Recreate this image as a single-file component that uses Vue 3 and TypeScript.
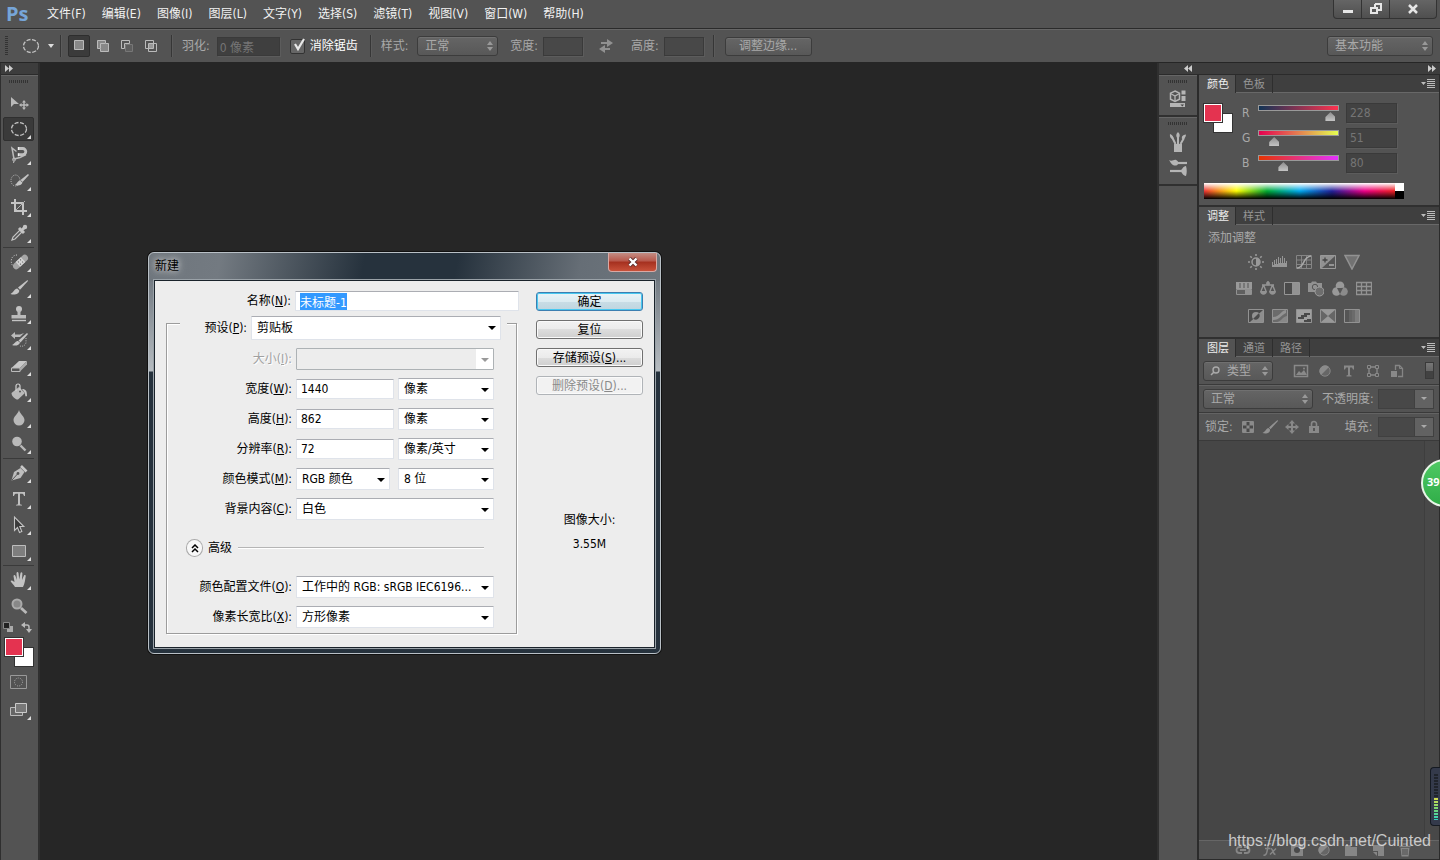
<script setup lang="ts">
import { onMounted, reactive, ref } from 'vue'

interface Tool { id: string; label: string; flyout?: boolean; active?: boolean }
interface Channel { key: 'r' | 'g' | 'b'; label: string }

const menus: string[] = ['文件(F)', '编辑(E)', '图像(I)', '图层(L)', '文字(Y)', '选择(S)', '滤镜(T)', '视图(V)', '窗口(W)', '帮助(H)']

const toolGroups: Tool[][] = [
  [
    { id: 'move', label: '移动工具' },
    { id: 'ellipse', label: '椭圆选框工具', flyout: true, active: true },
    { id: 'lasso', label: '磁性套索工具', flyout: true },
    { id: 'quick', label: '快速选择工具', flyout: true },
    { id: 'crop', label: '裁剪工具', flyout: true },
    { id: 'dropper', label: '吸管工具', flyout: true },
  ],
  [
    { id: 'heal', label: '污点修复画笔工具', flyout: true },
    { id: 'brush', label: '画笔工具', flyout: true },
    { id: 'stamp', label: '仿制图章工具', flyout: true },
    { id: 'history', label: '历史记录画笔工具', flyout: true },
    { id: 'eraser', label: '橡皮擦工具', flyout: true },
    { id: 'bucket', label: '油漆桶工具', flyout: true },
    { id: 'blur', label: '模糊工具', flyout: true },
    { id: 'dodge', label: '减淡工具', flyout: true },
  ],
  [
    { id: 'pen', label: '钢笔工具', flyout: true },
    { id: 'type', label: '横排文字工具', flyout: true },
    { id: 'path', label: '路径选择工具', flyout: true },
    { id: 'rect', label: '矩形工具', flyout: true },
  ],
  [
    { id: 'hand', label: '抓手工具', flyout: true },
    { id: 'zoom', label: '缩放工具' },
  ],
]

const glyphs: Record<string, string> = {
  move: '<path d="M4 6v10l3-3h5z" fill="#b9b9b9"/><path d="M17 9l2 2.500h-1.300v1.800h1.800V12l2.500 2-2.500 2v-1.300h-1.800v1.800H19L17 19l-2-2.500h1.300v-1.800h-1.800V16L12 14l2.500-2v1.300h1.800v-1.800H15z" fill="#b9b9b9"/>',
  ellipse: '<ellipse cx="12" cy="12" rx="7.500" ry="6.500" fill="none" stroke="#c4c4c4" stroke-width="1.300" stroke-dasharray="4 1.600"/>',
  lasso: '<path d="M9.500 8.500L5 5l2 11 6-1.500 6-3" fill="none" stroke="#bbb" stroke-width="1.500"/><circle cx="7" cy="16.500" r="1.500" fill="none" stroke="#bbb"/><path d="M7 18l-.5 2" stroke="#bbb"/><path d="M11.500 5.500h4.200a3 3 0 010 6.200h-4.200" fill="none" stroke="#c0c0c0" stroke-width="2.800"/><path d="M11.500 4v3M11.500 10.200v3" stroke="#eee" stroke-width="1.400"/>',
  quick: '<ellipse cx="8.500" cy="11.500" rx="4.500" ry="5.500" fill="none" stroke="#c4c4c4" stroke-dasharray="1 1.300"/><path d="M21 5l-7.500 6 2 2L22 6z" fill="#c4c4c4"/><path d="M13 11.500c-2 .3-2.500 2.500-5 4.500 3 1.200 6.800.5 7.500-2.500z" fill="#c4c4c4"/>',
  crop: '<path d="M8 4v12h12M4 8h12v12" fill="none" stroke="#c4c4c4" stroke-width="2"/><path d="M9 15l9-9" stroke="#b0b0b0"/>',
  dropper: '<path d="M5 19l1-3 7-7 2 2-7 7z" fill="#555" stroke="#c4c4c4" stroke-width="1.200"/><path d="M12 7l5 5M14.500 9.500L18 6" stroke="#c4c4c4" stroke-width="3"/><circle cx="18" cy="6" r="2.200" fill="#c4c4c4"/>',
  heal: '<path d="M10 5c-8 0-7 12-1 13" fill="none" stroke="#ccc" stroke-dasharray="1 1.500"/><g transform="rotate(-43 13.500 12)"><rect x="4.500" y="8.700" width="18" height="6.600" rx="3.300" fill="#a6a6a6"/><path d="M10 8.700h7v6.600h-7z" fill="#d4d4d4"/><path d="M11.500 10.500h1M14.500 10.500h1M11.500 13.500h1M14.500 13.500h1" stroke="#666" stroke-width="1.200"/></g>',
  brush: '<path d="M20.500 4L11 11.500l2 2.200L21 5z" fill="#c4c4c4"/><path d="M10.300 12.500C7 13 7.500 15.500 3.500 18c3.500 1.300 8.800.5 8.800-3.500z" fill="#c4c4c4"/>',
  stamp: '<circle cx="12" cy="7" r="3" fill="#c4c4c4"/><path d="M10.500 8h3v5h5.500v3.500H4.500V13h6z" fill="#bbb"/><path d="M5 18.500h14" stroke="#c4c4c4" stroke-width="1.400"/>',
  history: '<path d="M8 4L4 7.500 8 11V9h5l4-4-4 1.500H8z" fill="#bbb"/><path d="M20 5l-8.500 7.500 2 2L21 6z" fill="#c4c4c4"/><path d="M11 13c-2.500 0-3 2.500-6 4 3 1.300 7.500.5 8-2.500z" fill="#c4c4c4"/><path d="M19 10v4c0 3-3 5-6 4" fill="none" stroke="#bbb" stroke-dasharray="1 1.300"/>',
  eraser: '<path d="M4.500 14L12 7h8l-7 7z" fill="#c8c8c8"/><path d="M4.500 14h8.500v3.500H4.500z" fill="#555" stroke="#bbb"/><path d="M13 14l7-7v3.500l-7 7z" fill="#aaa"/>',
  bucket: '<path d="M4.500 13l7.500-6 6 6-7 6.500c-2 .5-6.500-3-6.500-6.500z" fill="#b9b9b9"/><path d="M9 11V6a2 2 0 014 0v5" fill="none" stroke="#d0d0d0" stroke-width="1.200"/><circle cx="13" cy="11.500" r="1" fill="#555"/><path d="M15 9c4 0 5 2 5 7-1.500 1-2 0-2-3z" fill="#c4c4c4"/>',
  blur: '<path d="M12 4c1 4 5.500 6.500 5.500 10a5.500 5.500 0 01-11 0C6.500 10.500 11 8 12 4z" fill="#b9b9b9"/>',
  dodge: '<circle cx="10" cy="9.500" r="4.800" fill="#b9b9b9"/><path d="M13.500 13.500l5 5" stroke="#b9b9b9" stroke-width="2.400"/>',
  pen: '<path d="M4.500 19.500L7 11l6.500-4 4 4-4 6z" fill="#bdbdbd"/><path d="M5 19l5.500-6" stroke="#555"/><circle cx="11" cy="12.500" r="1.400" fill="#555"/><path d="M14 5l5.500 5.500" stroke="#c8c8c8" stroke-width="2.600"/>',
  type: '<path d="M6 5h12v4h-1c-.4-1.800-1-2.300-2.500-2.300H13v9.800c0 1 .5 1.200 2 1.300v.7H9v-.7c1.500-.1 2-.3 2-1.300V6.700H9.500C8 6.700 7.400 7.200 7 9H6z" fill="#c0c0c0"/>',
  path: '<path d="M7.500 4v13.500l3-3 2 5 2.300-1-2-5h4z" fill="#3a3a3a" stroke="#c4c4c4" stroke-width="1.100"/>',
  rect: '<path d="M5.500 6.500h13v11h-13z" fill="#7e7e7e" stroke="#bdbdbd"/>',
  hand: '<path d="M8 19c-1-2-3.500-4-4.500-6 .8-1 2.200-.5 4 1L6.500 8c.2-1.200 1.500-1.200 2 0l1.300 4-.3-7c.4-1.200 1.700-1.200 2 0l.7 6.500L13.500 5c.5-1 1.700-.9 1.900.2L15 12l2-4.500c.6-.8 1.700-.5 1.700.6-.5 3-.8 7.900-2.700 10.900z" fill="#c2c2c2"/>',
  zoom: '<circle cx="10" cy="10" r="4.500" fill="#888" stroke="#aaa" stroke-width="2"/><path d="M14 14l5.500 5" stroke="#b9b9b9" stroke-width="2.800"/>',
  quickmask: '<path d="M3.500 5.500h16v13h-16z" fill="none" stroke="#999"/><circle cx="11.500" cy="12" r="4" fill="none" stroke="#aaa" stroke-dasharray="1 1.200"/>',
  screen: '<path d="M3.500 9.500h12v8h-12z" fill="#666" stroke="#bbb"/><path d="M8.500 5.500h11v9h-11z" fill="#787878" stroke="#ccc"/>',
  selNew: '<path d="M2.500 1.500h9v9h-9z" fill="#888" stroke="#bbb"/>',
  selAdd: '<path d="M1.500 1.500h8v3h3v8h-8v-3h-3z" fill="#888" stroke="#bbb"/><path d="M4.500 9V4.500H9" fill="none" stroke="#bbb"/>',
  selSub: '<path d="M5.500 5.500h7v7h-7z" fill="#5e5e5e" stroke="#777"/><path d="M9.500 4.500v-3h-8v8h3v-5z" fill="none" stroke="#bbb"/>',
  selInt: '<path d="M1.500 1.500h8v8h-8zM4.500 4.500h8v8h-8z" fill="none" stroke="#bbb"/><path d="M5 5h4v4H5z" fill="#999"/>',
  swap: '<path d="M3 3h6V0l6 4-6 4V5H3z" fill="#919191"/><path d="M12 9H7V6l-6 4 6 4v-3h5z" fill="#919191"/>',
  cube: '<path d="M6 1l4.500 2.200v6L6 11.500 1.500 9.200v-6z" fill="none" stroke="#b5b5b5" stroke-width="1.500"/><path d="M1.500 3.500L6 6l4.500-2.500M6 6v5" fill="none" stroke="#b5b5b5" stroke-width="1.300"/><path d="M12.500.5h4v4h-4zM12.500 6h4v5h-4zM1 13h15v4H1z" fill="#b5b5b5"/><path d="M11.500 14.500h3.600l-1.800 2z" fill="#444"/>',
  brushes: '<path d="M5 12h8v8H5z" fill="#b5b5b5"/><path d="M6.500 12L3 5M9 12V5M11.500 12l3.500-6" stroke="#b5b5b5" stroke-width="2"/><path d="M1 2c-.5 3 1 5 3.500 5 0-2-.5-4-3.500-5zM9 0C6.500 2.500 7 5 9 6.500c2-1.500 2.500-4 0-6.500zM17 2.500c-3.500.5-4.500 2-4 4.500 2.500 0 4-2 4-4.500z" fill="#b5b5b5"/>',
  presets: '<path d="M8 4h10" stroke="#b5b5b5" stroke-width="2.200"/><path d="M0 1c3 2 5-1 7 0 3 1 3 5 0 5.500C3 7 2 4 0 1z" fill="#b5b5b5"/><path d="M1 12h11" stroke="#b5b5b5" stroke-width="2.200"/><path d="M11 12c2-1 3-5 6-5 1 3 1 7 0 10-3 0-4-4-6-5z" fill="#b5b5b5"/>',
  bright: '<circle cx="8" cy="8" r="4" fill="none" stroke="#999" stroke-width="1.500"/><path d="M8 4a4 4 0 010 8z" fill="#999"/><path d="M8 0v2M8 14v2M0 8h2M14 8h2M2.300 2.300l1.500 1.500M12.200 12.200l1.500 1.500M13.700 2.300l-1.500 1.500M3.800 12.200l-1.500 1.500" stroke="#999" stroke-width="1.600"/>',
  levels: '<path d="M0 13v-5h1v3h1V6h1v4h1V5h1v5h1V3h1v6h1V4h1v5h1V2h1v7h1V4h1v5h1V7h1v6z" fill="#969696"/>',
  curves: '<path d="M.5 1.500h15v13H.5zM5.500 2v12M10.500 2v12M1 6h14M1 10.500h14" fill="none" stroke="#858585"/><path d="M1 14c8 0 5-11 14-12" fill="none" stroke="#aaa" stroke-width="1.600"/>',
  exposure: '<path d="M.5 1.500h15v13H.5z" fill="#929292" stroke="#999"/><path d="M15 2v12H2z" fill="#555"/><path d="M2.500 6h5M5 3.500v5" stroke="#444" stroke-width="1.300"/><path d="M9 11h5" stroke="#aaa" stroke-width="1.500"/>',
  vibrance: '<path d="M1 1.500h14L8 15z" fill="#727272" stroke="#929292" stroke-width="1.500"/>',
  hue: '<path d="M0 1h16v7H0z" fill="#999"/><path d="M4 2v5M8 2v5M12 2v5" stroke="#777" stroke-width="2"/><path d="M.5 8.500h15v5H.5z" fill="#606060" stroke="#919191"/><path d="M9 9h6v4H9z" fill="#929292"/>',
  balance: '<path d="M8 0v4M2 4h12M3.500 4L1 10M3.500 4L6 10M12.500 4L10 10M12.500 4L15 10" stroke="#959595" stroke-width="1.400"/><path d="M0 10h7c0 5-7 5-7 0zM9 10h7c0 5-7 5-7 0z" fill="#929292"/><circle cx="8" cy="2.500" r="2" fill="#929292"/>',
  bw: '<path d="M.5 1.500h15v12H.5z" fill="#4b4b4b" stroke="#969696"/><path d="M8 2h7v11H8z" fill="#929292"/>',
  photo: '<path d="M0 2h3l1-1.500h4L9 2h5v9H0z" fill="#929292"/><circle cx="7" cy="6" r="2.700" fill="none" stroke="#555"/><circle cx="11.500" cy="10.500" r="4.500" fill="#6e6e6e" stroke="#a0a0a0"/>',
  mixer: '<circle cx="8" cy="4.800" r="4.300" fill="#999"/><circle cx="4.500" cy="10.500" r="4.300" fill="#999"/><circle cx="11.500" cy="10.500" r="4.300" fill="#8b8b8b"/><path d="M5 7h6l-3 6z" fill="#565656"/>',
  lookup: '<path d="M.5 1.500h15v12H.5zM5.500 2v11M10.500 2v11M1 5.500h14M1 9.500h14" fill="none" stroke="#929292" stroke-width="1.300"/>',
  invert: '<path d="M.5 1.500h15v13H.5z" fill="#4b4b4b" stroke="#929292"/><path d="M15 2v12H2z" fill="#8e8e8e"/><circle cx="8" cy="8" r="4" fill="#929292"/><path d="M5.200 10.800a4 4 0 005.600-5.600z" fill="#4b4b4b"/>',
  poster: '<path d="M.5 1.500h15v13H.5z" fill="#6b6b6b" stroke="#929292"/><path d="M1 9c7 0 7-6 13-7v3C9 7 8 12 1 12z" fill="#929292"/><path d="M5 14c5-1 5-5 10-6v6z" fill="#888"/>',
  threshold: '<path d="M.5 1.500h15v13H.5z" fill="#a0a0a0" stroke="#929292"/><path d="M2 9h3V7h3V5h6v2h-3v2H8v2H2zM8 12h3v-1h4v3H8z" fill="#4a4a4a"/>',
  selective: '<path d="M.5 1.500h15v13H.5z" fill="#666" stroke="#929292"/><path d="M1 2h14L1 14h14z" fill="#999"/>',
  gradmap: '<path d="M.5 1.500h15v13H.5z" fill="#6b6b6b" stroke="#929292"/><path d="M1 2h4v12H1z" fill="#555"/><path d="M5 2h3v12H5z" fill="#636363"/><path d="M11 2h4v12h-4z" fill="#7d7d7d"/>',
  fImage: '<path d="M1.500 2.500h13v11h-13z" fill="none" stroke="#898989" stroke-width="1.500"/><path d="M3 12l3-4 2 2 3-3 3 5z" fill="#898989"/><circle cx="11" cy="5.500" r="1" fill="#898989"/>',
  fAdjust: '<circle cx="8" cy="8" r="5.200" fill="#666" stroke="#858585"/><path d="M4 12L12 4A5.500 5.500 0 004 4.500 5.500 5.500 0 004 12z" fill="#8b8b8b"/>',
  fType: '<path d="M3 2.500h10v4h-1l-1-2H9v7.500l1.500.5v1h-5v-1L7 12V4.500H5l-1 2H3z" fill="#898989"/>',
  fShape: '<path d="M4 4h8v8H4z" fill="none" stroke="#898989" stroke-width="1.400"/><path d="M2.500 2.500h3v3h-3zM10.500 2.500h3v3h-3zM2.500 10.500h3v3h-3zM10.500 10.500h3v3h-3z" fill="#535353" stroke="#898989"/>',
  fSmart: '<path d="M6.500 7V2.500h4l3 3v8H9" fill="none" stroke="#858585" stroke-width="1.300"/><path d="M10.500 2.500v3h3" fill="none" stroke="#858585"/><path d="M2 8h6v6H2z" fill="#898989"/>',
  lockPixels: '<path d="M2.500 2.500h11v11h-11z" fill="#4a4a4a" stroke="#898989"/><path d="M3 3h3.500v3.500H3zM9.500 3H13v3.500H9.500zM6.500 6.500h3v3h-3zM3 9.500h3.500V13H3zM9.500 9.500H13V13H9.500z" fill="#8b8b8b"/>',
  lockBrush: '<path d="M15.500 1L7 8.500l1.500 1.700L16 2z" fill="#929292"/><path d="M6.500 9C4 9.500 4 12 .5 14c3 1 8 .5 7.500-3.500z" fill="#929292"/>',
  lockMove: '<path d="M8 1l3 3.500H9V7h2.500V5L15 8l-3.500 3V9H9v2.500h2L8 15l-3-3.500h2V9H4.500v2L1 8l3.500-3v2H7V4.500H5z" fill="#898989"/>',
  lock: '<path d="M5.500 7V5a2.500 2.500 0 015 0v2" fill="none" stroke="#898989" stroke-width="1.600"/><path d="M3 7h10v7H3z" fill="#898989"/><path d="M8 9v3" stroke="#4a4a4a" stroke-width="1.600"/>',
  link: '<path d="M7 5H4.500a3 3 0 000 6H7M9 5h2.500a3 3 0 010 6H9M5 8h6" fill="none" stroke="#868686" stroke-width="1.800"/>',
  fx: '<path d="M9 2C6 1 6 4 5.500 7S4.500 14 1.500 13M3 6.500h5M8.500 6.500c3 0 2 6 5 6M14 6.500l-6 6" fill="none" stroke="#868686" stroke-width="1.500"/>',
  mask: '<path d="M2 2h12v12H2z" fill="#868686"/><circle cx="8" cy="8" r="3" fill="#4a4a4a"/>',
  folder: '<path d="M2 3h5l1 2h6v9H2z" fill="#868686"/>',
  newLayer: '<path d="M3 3h11v11H8V9H3z" fill="#868686"/><path d="M3 10h4v4z" fill="#868686"/>',
  trash: '<path d="M6 2h4M2.500 4.500h11" stroke="#868686" stroke-width="1.500"/><path d="M3.500 6h9l-1 8.500h-7z" fill="#868686"/><path d="M6 7v6M8 7v6M10 7v6" stroke="#4c4c4c"/>',
}

const adjustments: string[][] = [
  ['bright', 'levels', 'curves', 'exposure', 'vibrance'],
  ['hue', 'balance', 'bw', 'photo', 'mixer', 'lookup'],
  ['invert', 'poster', 'threshold', 'selective', 'gradmap'],
]
const layerFilters = ['fImage', 'fAdjust', 'fType', 'fShape', 'fSmart']
const layerLocks = ['lockPixels', 'lockBrush', 'lockMove', 'lock']
const layerActions = ['link', 'fx', 'mask', 'fAdjust', 'folder', 'newLayer', 'trash']
const selectionModes = ['selNew', 'selAdd', 'selSub', 'selInt']
const channels: Channel[] = [{ key: 'r', label: 'R' }, { key: 'g', label: 'G' }, { key: 'b', label: 'B' }]
const color = reactive({ r: 228, g: 51, b: 80 })
const doc = reactive({ name: '未标题-1', width: '1440', height: '862', resolution: '72' })
const antialias = ref(true)
const nameField = ref<HTMLInputElement | null>(null)

onMounted(() => {
  nameField.value?.focus()
  nameField.value?.select()
})
</script>

<template>
  <div class="app">
    <header class="menubar">
      <span class="logo">Ps</span>
      <nav class="menus">
        <button v-for="m in menus" :key="m" type="button">{{ m }}</button>
      </nav>
      <div class="winctl">
        <button type="button" aria-label="最小化"><svg width="12" height="12"><path d="M1 7h10v3H1z" fill="#e6e6e6" /></svg></button>
        <button type="button" aria-label="还原"><svg width="12" height="12"><path d="M5 1h6v6H8M5 4V1" fill="none" stroke="#e6e6e6" stroke-width="2" /><path d="M1 5h6v5H1z" fill="none" stroke="#e6e6e6" stroke-width="2" /></svg></button>
        <button type="button" aria-label="关闭"><svg width="12" height="12"><path d="M2 2l8 8M10 2l-8 8" stroke="#e6e6e6" stroke-width="2.500" /></svg></button>
      </div>
    </header>

    <div class="options">
      <span class="grip-v"></span>
      <svg class="opt-tool" width="24" height="24" v-html="glyphs.ellipse"></svg>
      <span class="caret"></span>
      <span class="rule"></span>
      <div class="modes">
        <button v-for="(m, i) in selectionModes" :key="m" type="button" :class="{ on: i === 0 }" :aria-label="m">
          <svg width="14" height="14" v-html="glyphs[m]"></svg>
        </button>
      </div>
      <span class="rule"></span>
      <label for="feather">羽化:</label>
      <input id="feather" class="field feather" value="0 像素" disabled>
      <label class="check"><input v-model="antialias" type="checkbox"><span class="box"><svg width="16" height="16"><path v-if="antialias" d="M4 6l3 5 6-10" fill="none" stroke="#e8e8e8" stroke-width="2.200" /></svg></span><span>消除锯齿</span></label>
      <span class="rule"></span>
      <label for="style">样式:</label>
      <span class="pick style-pick"><select id="style"><option>正常</option></select></span>
      <label class="w-label" for="fixw">宽度:</label>
      <input id="fixw" class="field small" disabled>
      <button class="swap" type="button" aria-label="交换"><svg width="16" height="14" v-html="glyphs.swap"></svg></button>
      <label for="fixh">高度:</label>
      <input id="fixh" class="field small" disabled>
      <span class="rule"></span>
      <button class="refine" type="button">调整边缘...</button>
      <span class="pick workspace"><select aria-label="工作区"><option>基本功能</option></select></span>
    </div>

    <div class="main">
      <aside class="toolbar">
        <div class="collapse"><svg width="8" height="7"><path d="M0 0l4 3.500L0 7zM4 0l4 3.500L4 7z" fill="#ccc" /></svg></div>
        <div class="toolbox">
          <span class="grip-h"></span>
          <div v-for="(g, gi) in toolGroups" :key="gi" class="tools">
            <button v-for="t in g" :key="t.id" type="button" class="tool" :class="{ on: t.active }" :aria-label="t.label">
              <svg width="24" height="24"><g v-html="glyphs[t.id]"></g><path v-if="t.flyout" d="M24 18v4h-4z" fill="#ddd" /></svg>
            </button>
          </div>
          <div class="mini">
            <svg width="10" height="10"><path d="M4 4h6v6H4z" fill="#aaa" /><path d="M.5.5h6v6h-6z" fill="#222" stroke="#888" /></svg>
            <svg width="11" height="11"><path d="M3 3h3q2 0 2 2v4" fill="none" stroke="#bbb" stroke-width="1.500" /><path d="M4 0v6L0 3zM5 7h6l-3 4z" fill="#bbb" /></svg>
          </div>
          <div class="swatches"><span class="bg"></span><span class="fg"></span></div>
          <button class="tool extra" type="button" aria-label="快速蒙版"><svg width="24" height="24" v-html="glyphs.quickmask"></svg></button>
          <button class="tool extra" type="button" aria-label="屏幕模式"><svg width="24" height="24"><g v-html="glyphs.screen"></g><path d="M24 18v4h-4z" fill="#ddd" /></svg></button>
        </div>
      </aside>

      <main class="canvas">
        <section class="dialog" role="dialog" aria-labelledby="dlg-title">
          <div class="titlebar">
            <h1 id="dlg-title">新建</h1>
            <button class="close" type="button" aria-label="关闭对话框"><svg width="12" height="10"><path d="M2.500 1.500l7 7M9.500 1.500l-7 7" stroke="#5b3030" stroke-width="4" /><path d="M2.500 1.500l7 7M9.500 1.500l-7 7" stroke="#fff" stroke-width="2.400" /></svg></button>
          </div>
          <form class="client" @submit.prevent>
            <div class="left">
              <div class="row name-row">
                <label for="name">名称(<u>N</u>):</label>
                <input id="name" ref="nameField" v-model="doc.name" class="text">
              </div>
              <div class="group">
                <div class="ghead">
                  <label for="preset">预设(<u>P</u>):</label>
                  <span class="combo preset"><select id="preset"><option>剪贴板</option></select></span>
                </div>
                <div class="row off">
                  <label for="size">大小(<u>I</u>):</label>
                  <span class="combo wide"><select id="size" disabled><option></option></select></span>
                </div>
                <div class="row">
                  <label for="w">宽度(<u>W</u>):</label>
                  <input id="w" v-model="doc.width" class="text num">
                  <span class="combo unit"><select aria-label="宽度单位"><option>像素</option></select></span>
                </div>
                <div class="row">
                  <label for="h">高度(<u>H</u>):</label>
                  <input id="h" v-model="doc.height" class="text num">
                  <span class="combo unit"><select aria-label="高度单位"><option>像素</option></select></span>
                </div>
                <div class="row">
                  <label for="res">分辨率(<u>R</u>):</label>
                  <input id="res" v-model="doc.resolution" class="text num">
                  <span class="combo unit"><select aria-label="分辨率单位"><option>像素/英寸</option></select></span>
                </div>
                <div class="row split">
                  <label for="mode">颜色模式(<u>M</u>):</label>
                  <span class="combo mode"><select id="mode"><option>RGB 颜色</option></select></span>
                  <span class="combo unit"><select aria-label="位深度"><option>8 位</option></select></span>
                </div>
                <div class="row">
                  <label for="bgc">背景内容(<u>C</u>):</label>
                  <span class="combo wide"><select id="bgc"><option>白色</option></select></span>
                </div>
                <div class="advanced">
                  <button type="button" aria-label="收起高级选项"><svg width="8" height="9"><path d="M1 4l3-3 3 3M1 8l3-3 3 3" fill="none" stroke="#000" stroke-width="1.500" /></svg></button>
                  <span>高级</span>
                  <i></i>
                </div>
                <div class="row">
                  <label for="profile">颜色配置文件(<u>O</u>):</label>
                  <span class="combo wide"><select id="profile"><option>工作中的 RGB: sRGB IEC6196...</option></select></span>
                </div>
                <div class="row">
                  <label for="aspect">像素长宽比(<u>X</u>):</label>
                  <span class="combo wide"><select id="aspect"><option>方形像素</option></select></span>
                </div>
              </div>
            </div>
            <div class="right">
              <button class="btn primary" type="submit">确定</button>
              <button class="btn" type="button">复位</button>
              <button class="btn" type="button">存储预设(<u>S</u>)...</button>
              <button class="btn" type="button" disabled>删除预设(<u>D</u>)...</button>
              <p class="size">图像大小:<br>3.55M</p>
            </div>
          </form>
        </section>
      </main>

      <aside class="side">
        <div class="collapse right-collapse">
          <svg width="8" height="7"><path d="M4 0L0 3.500 4 7zM8 0L4 3.500 8 7z" fill="#ccc" /></svg>
          <svg width="8" height="7"><path d="M0 0l4 3.500L0 7zM4 0l4 3.500L4 7z" fill="#ccc" /></svg>
        </div>
        <div class="side-body">
          <div class="dock">
            <div class="dgroup"><span class="grip-h"></span><button type="button" aria-label="属性"><svg width="18" height="18" v-html="glyphs.cube"></svg></button></div>
            <div class="dgroup"><span class="grip-h"></span><button type="button" aria-label="画笔"><svg width="18" height="20" v-html="glyphs.brushes"></svg></button><button type="button" aria-label="画笔预设"><svg width="18" height="18" v-html="glyphs.presets"></svg></button></div>
          </div>
          <div class="panels">
            <section class="panel">
              <div class="tabs"><button class="on" type="button">颜色</button><button type="button">色板</button><svg width="14" height="9"><path d="M0 3h5L2.500 6zM6 0h8v1H6zM6 2h8v1H6zM6 4h8v1H6zM6 6h8v1H6zM6 8h8v1H6z" fill="#bbb" /></svg></div>
              <div class="color-body">
                <div class="swatches"><span class="bg"></span><span class="fg"></span></div>
                <div class="channels">
                  <div v-for="c in channels" :key="c.key" class="channel">
                    <label :for="'ch-' + c.key">{{ c.label }}</label>
                    <input :id="'ch-' + c.key" v-model.number="color[c.key]" type="range" min="0" max="255" :class="c.key">
                    <input class="field val" :value="color[c.key]" :aria-label="c.label + ' 数值'" disabled>
                  </div>
                </div>
              </div>
              <div class="spectrum"><span></span><i></i></div>
            </section>

            <section class="panel">
              <div class="tabs"><button class="on" type="button">调整</button><button type="button">样式</button><svg width="14" height="9"><path d="M0 3h5L2.500 6zM6 0h8v1H6zM6 2h8v1H6zM6 4h8v1H6zM6 6h8v1H6zM6 8h8v1H6z" fill="#bbb" /></svg></div>
              <div class="adjust-body">
                <p>添加调整</p>
                <div v-for="(r, i) in adjustments" :key="i" class="adj-row">
                  <button v-for="a in r" :key="a" type="button" :aria-label="a"><svg width="16" height="16" v-html="glyphs[a]"></svg></button>
                </div>
              </div>
            </section>

            <section class="panel layers">
              <div class="tabs"><button class="on" type="button">图层</button><button type="button">通道</button><button type="button">路径</button><svg width="14" height="9"><path d="M0 3h5L2.500 6zM6 0h8v1H6zM6 2h8v1H6zM6 4h8v1H6zM6 6h8v1H6zM6 8h8v1H6z" fill="#bbb" /></svg></div>
              <div class="lrow">
                <span class="pick kind"><svg width="10" height="10"><circle cx="6" cy="4" r="3" fill="none" stroke="#aaa" stroke-width="1.400" /><path d="M4 6L1 9" stroke="#aaa" stroke-width="1.600" /></svg><select aria-label="图层类型"><option>类型</option></select></span>
                <div class="filters"><button v-for="f in layerFilters" :key="f" type="button" :aria-label="f"><svg width="16" height="16" v-html="glyphs[f]"></svg></button></div>
                <span class="toggle"></span>
              </div>
              <div class="lrow">
                <span class="pick blend"><select aria-label="混合模式"><option>正常</option></select></span>
                <label for="opacity">不透明度:</label>
                <span class="spin"><input id="opacity" disabled><b></b></span>
              </div>
              <div class="lrow">
                <span>锁定:</span>
                <div class="locks"><button v-for="l in layerLocks" :key="l" type="button" :aria-label="l"><svg width="16" height="16" v-html="glyphs[l]"></svg></button></div>
                <label for="fill">填充:</label>
                <span class="spin"><input id="fill" disabled><b></b></span>
              </div>
              <div class="list"><span></span></div>
              <div class="actions"><button v-for="a in layerActions" :key="a" type="button" :aria-label="a"><svg width="16" height="16" v-html="glyphs[a]"></svg></button></div>
            </section>
          </div>
        </div>
      </aside>
    </div>

    <div class="badge">39</div>
    <div class="meter"><i></i></div>
    <a class="watermark" href="https://blog.csdn.net/Cuinted">https://blog.csdn.net/Cuinted</a>
  </div>
</template>

<style>
body { margin: 0; background: #262626; }
</style>

<style scoped>
* { box-sizing: border-box; }
.app {
  position: relative; display: flex; flex-direction: column; height: 100vh; overflow: hidden;
  background: #535353; color: #a9a9a9;
  font: 12px/16px "DejaVu Sans Condensed", "Noto Sans", "Noto Sans CJK SC", sans-serif;
}
button, input, select { font: inherit; color: inherit; margin: 0; padding: 0; border: 0; background: none; outline: none; border-radius: 0; }
button { display: inline-flex; align-items: center; justify-content: center; white-space: nowrap; }
select { appearance: none; width: 100%; height: 100%; opacity: 1; }
svg { display: block; flex: none; }
p, h1 { margin: 0; font: inherit; }
label { white-space: nowrap; }

.menubar { display: flex; flex: none; height: 29px; border-bottom: 1px solid #2b2b2b; }
.logo { width: 47px; padding-left: 6px; font: 700 20px/27px "Open Sans", sans-serif; color: #76a5d8; }
.menus { display: flex; gap: 16px; color: #f2f2f2; }
.winctl { display: flex; height: 19px; margin: 0 3px 0 auto; border: 1px solid #333; border-top: 0; border-radius: 0 0 4px 4px; background: linear-gradient(#656565, #4f4f4f); }
.winctl button { width: 28px; border-right: 1px solid #333; }
.winctl button:last-child { width: 46px; border: 0; }

.options { display: flex; align-items: center; flex: none; height: 33px; padding: 0 7px 0 5px; border-top: 1px solid #666; }
.grip-v { width: 3px; height: 20px; margin-right: 11px; background: repeating-linear-gradient(#333 0 1px, transparent 1px 2px); }
.caret { margin: 0 6px 0 5px; border: 3px solid transparent; border-top: 4px solid #ddd; border-bottom: 0; }
.rule { width: 1px; height: 22px; background: #363636; margin-right: 7px; box-shadow: 1px 0 #5b5b5b; }
.rule + label { margin-left: 3px; }
.modes { display: flex; align-items: center; gap: 2px; margin-right: 9px; }
.modes button { width: 22px; height: 22px; }
.modes .on { background: #3b3b3b; border: 1px solid #2e2e2e; border-radius: 2px; }
.field { height: 19px; background: #484848; border: 1px solid #3a3a3a; box-shadow: 1px 1px #5c5c5c; color: #757575; }
.feather { width: 63px; margin-left: 7px; padding-left: 2px; background: #3f3f3f; }
.check { display: flex; align-items: center; gap: 5px; margin: 0 12px 0 10px; color: #fff; }
.check input { position: absolute; opacity: 0; }
.box { width: 15px; height: 15px; border: 1px solid #333; border-radius: 2px; background: #666; }
.box svg { margin-top: -2px; }
.pick { position: relative; display: flex; align-items: center; height: 20px; border: 1px solid #3c3c3c; border-radius: 3px; background: linear-gradient(#656565, #585858); box-shadow: inset 0 1px #707070; }
.pick select { padding-left: 7px; }
.pick::before, .pick::after { content: ""; position: absolute; right: 4px; border: 3px solid transparent; pointer-events: none; }
.pick::before { top: 4px; border-bottom: 4px solid #999; border-top: 0; }
.pick::after { bottom: 4px; border-top: 4px solid #999; border-bottom: 0; }
.style-pick { width: 81px; margin-left: 9px; }
.w-label { margin-left: 12px; }
.small { width: 40px; margin-left: 5px; }
.swap { margin: 0 17px 0 15px; }
.small + .rule { margin: 0 11px 0 9px; }
.refine { width: 87px; height: 19px; border: 1px solid #3c3c3c; border-radius: 3px; background: linear-gradient(#656565, #585858); box-shadow: inset 0 1px #707070; }
.workspace { width: 106px; margin-left: auto; }

.main { display: flex; flex: 1; min-height: 0; border-top: 1px solid #262626; }
.collapse { display: flex; align-items: center; flex: none; height: 12px; padding: 0 4px; background: #3d3d3d; border-bottom: 1px solid #2b2b2b; }
.toolbar { display: flex; flex-direction: column; width: 40px; border: solid #2f2f2f; border-width: 0 2px 0 1px; }
.toolbox { display: flex; flex-direction: column; align-items: center; flex: 1; padding: 4px 2px 0 0; border-top: 1px solid #666; }
.grip-h { width: 20px; height: 3px; flex: none; background: repeating-linear-gradient(90deg, #333 0 1px, transparent 1px 2px); }
.toolbox > .grip-h { margin-bottom: 7px; }
.tools + .tools { border-top: 1px solid #3a3a3a; margin-top: 1px; padding-top: 1px; }
.tools { display: flex; flex-direction: column; }
.tool { width: 31px; height: 24px; margin: 1px 0; border: 1px solid transparent; flex: none; }
.tool.on { background: #3a3a3a; border-color: #2f2f2f; border-radius: 2px; }
.mini { display: flex; gap: 8px; margin: 3px 0 4px; padding-right: 2px; }
.swatches { position: relative; width: 30px; height: 30px; flex: none; }
.swatches span { position: absolute; width: 20px; height: 20px; border: 1px solid #333; background: #fff; }
.swatches .bg { right: 0; bottom: 0; }
.swatches .fg { left: 0; top: 0; background: #e43350; box-shadow: inset 0 0 0 1px #fff; }
.extra { margin-top: 3px; }

.canvas { position: relative; flex: 1; min-width: 0; background: #262626; }

.dialog {
  position: absolute; left: 108px; top: 189px; width: 513px; padding: 0 5px 5px; border: 1px solid #b9c0c6; border-radius: 6px;
  background: linear-gradient(100deg, #6f767d, #737a81 14%, #26323d 42%, #26323d 60%, #666e76 84%, #6e767d) top / 100% 28px no-repeat,
    linear-gradient(#737b83 28px, #b6bcc1 118px, #26323d 119px);
  box-shadow: 0 0 0 1px #111;
  color: #000;
}
.titlebar { display: flex; justify-content: space-between; height: 27px; }
.titlebar h1 { padding-left: 1px; line-height: 26px; text-shadow: 0 0 6px #ccc, 0 0 9px #ccc; }
.close { width: 49px; height: 19px; margin-right: -2px; border: 1px solid #d9a9a4; border-top: 0; border-radius: 0 0 4px 4px; background: linear-gradient(#c38c83, #b8584b 45%, #a5301f 50%, #c8513a); }
.client { display: flex; justify-content: space-between; padding: 10px 11px 13px; background: #ededed; border: 1px solid #1a232b; box-shadow: 0 0 0 1px #9aa2a8; }
.row { display: flex; align-items: center; gap: 4px; height: 30px; }
.row label { width: 125px; text-align: right; }
.name-row { height: 20px; margin-bottom: 12px; }
.name-row .text { width: 224px; }
.text { height: 20px; padding: 0 4px; background: #fff; border: 1px solid #dfe3ea; border-top-color: #abadb3; border-radius: 1px; color: #000; }
.text::selection { background: #3399ff; color: #fff; }
.num { width: 98px; }
.group { width: 351px; padding-bottom: 1px; border: 1px solid #9c9c9c; box-shadow: 1px 1px #fff, inset 1px 1px #fff; }
.ghead { display: flex; align-items: center; gap: 4px; height: 23px; margin: -8px 9px 5px 13px; background: #ededed; }
.ghead label { width: 67px; text-align: right; }
.combo { position: relative; display: block; height: 22px; background: #fff; border: 1px solid #dfe3ea; border-top-color: #abadb3; border-radius: 1px; }
.combo select { padding-left: 5px; }
.combo::after { content: ""; position: absolute; right: 4px; top: 9px; border: 4px solid transparent; border-top-color: #000; border-bottom: 0; pointer-events: none; }
.preset { width: 250px; height: 24px; }
.wide { width: 198px; }
.unit { width: 96px; }
.mode { width: 94px; }
.mode + .unit { margin-left: 4px; }
.off label { color: #a0a0a0; text-shadow: 1px 1px #fff; }
.off .combo { border-color: #adb2b5; background: linear-gradient(90deg, #ededed 179px, #fff 179px); }
.off .combo::after { border-top-color: #999; }
.advanced { display: flex; align-items: center; gap: 6px; height: 18px; margin: 15px 32px 15px 20px; }
.advanced button { width: 15px; height: 16px; border-radius: 8px; background: #f8f8f8; box-shadow: 0 0 0 1px #aaa; }
.advanced i { flex: 1; height: 2px; background: #b5b5b5; border-bottom: 1px solid #fff; }
.right { display: flex; flex-direction: column; gap: 9px; width: 107px; padding-top: 1px; }
.btn { height: 19px; border: 1px solid #707070; border-radius: 3px; background: linear-gradient(#f2f2f2, #ebebeb 50%, #ddd 50%, #cfcfcf); box-shadow: inset 0 0 0 1px #fafafa; }
.primary { border-color: #3c7fb1; background: linear-gradient(#eaf4f8, #dcebf1 50%, #c9dde6 50%, #bfd5df); box-shadow: inset 0 0 0 1px #48c8f0; }
.btn:disabled { border-color: #b0b4b8; background: #f2f2f2; color: #8a8a8a; }
.size { margin-top: 104px; line-height: 24px; text-align: center; }

.side { display: flex; flex-direction: column; width: 283px; border-left: 2px solid #2f2f2f; }
.right-collapse { justify-content: space-between; padding-left: 25px; }
.side-body { display: flex; flex: 1; min-height: 0; }
.dock { width: 38px; }
.dgroup { display: flex; flex-direction: column; align-items: center; gap: 7px; padding: 4px 0 7px; border-top: 1px solid #666; border-bottom: 2px solid #303030; }
.panels { display: flex; flex-direction: column; flex: 1; min-width: 0; border: solid #2b2b2b; border-width: 0 1px 1px 2px; }
.panel { border-bottom: 2px solid #303030; }
.tabs { display: flex; align-items: center; height: 18px; background: #3f3f3f; border-bottom: 1px solid #686868; font-size: 11px; color: #969696; }
.tabs button { height: 18px; padding: 2px 7px 0; border-right: 1px solid #2e2e2e; }
.tabs .on { padding: 2px 6px 0 8px; background: #535353; color: #eee; }
.tabs svg { margin: 0 4px 0 auto; }
.color-body { display: flex; gap: 9px; padding: 10px 0 0 4px; }
.channels { display: flex; flex-direction: column; gap: 5px; }
.channel { display: flex; align-items: center; height: 20px; }
.channel label { width: 9px; }
.channel input[type="range"] {
  --from: #123455; --to: #ff3350;
  appearance: none; width: 91px; height: 16px; margin: 0 2px;
  background: linear-gradient(90deg, var(--from), var(--to)) 6px 1px / 79px 4px no-repeat, linear-gradient(#999, #999) 5px 0 / 81px 6px no-repeat;
}
.channel input.g { --from: #e40050; --to: #e4ff50; }
.channel input.b { --from: #e43300; --to: #e433ff; }
input[type="range"]::-webkit-slider-runnable-track { height: 16px; }
input[type="range"]::-webkit-slider-thumb { appearance: none; width: 10px; height: 9px; margin-top: 7px; background: linear-gradient(#8c8c8c, #c4c4c4); clip-path: polygon(50% 0, 100% 55%, 100% 100%, 0 100%, 0 55%); }
.val { width: 51px; height: 20px; padding-left: 3px; background: #424242; }
.spectrum { display: flex; width: 200px; height: 16px; margin: 10px 0 6px 5px; }
.spectrum span { flex: 1; background: linear-gradient(#fff, transparent 50%, #000), linear-gradient(90deg, #e33, #ff0 17%, #0a3 33%, #0ae 50%, #229 67%, #e08 84%, #e22); }
.spectrum i { width: 9px; background: linear-gradient(#fff 50%, #000 50%); }
.adjust-body { height: 112px; padding: 4px 0 0 9px; }
.adjust-body p { line-height: 18px; }
.adj-row { display: flex; gap: 8px; width: 192px; height: 16px; margin: 7px 0 11px; justify-content: center; }
.layers { display: flex; flex-direction: column; flex: 1; min-height: 0; border: 0; }
.lrow { display: flex; align-items: center; flex: none; height: 28px; padding: 0 5px 0 4px; border-bottom: 1px solid #3a3a3a; box-shadow: 0 1px #636363; }
.lrow > span:first-child:not(.pick) { padding-left: 2px; }
.kind { width: 70px; padding-left: 6px; }
.filters { display: flex; gap: 8px; margin-left: 20px; }
.toggle { width: 9px; height: 17px; margin-left: auto; border: 1px solid #3a3a3a; background: linear-gradient(#777, #666 8px, #424242 8px); }
.blend { width: 110px; margin-right: 9px; }
.spin { display: flex; width: 56px; height: 20px; margin-left: auto; border: 1px solid #404040; }
.spin input { width: 35px; background: #484848; }
.spin b { display: flex; flex: 1; align-items: center; justify-content: center; background: #626262; border-left: 1px solid #404040; }
.spin b::after { content: ""; border: 3px solid transparent; border-top: 3px solid #aaa; border-bottom: 0; }
.locks { display: flex; gap: 6px; margin: 0 23px 0 7px; }
.list { display: flex; justify-content: flex-end; flex: 1; min-height: 0; background: #464646; }
.list span { width: 15px; border-left: 1px solid #3e3e3e; background: #484848; }
.actions { display: flex; flex: none; gap: 11px; height: 19px; padding-left: 36px; border-top: 1px solid #666; }

.badge { position: absolute; right: -29px; top: 459px; width: 48px; height: 48px; padding-left: 4px; border: 2px solid #e8f5e8; border-radius: 50%; background: linear-gradient(#4fc964, #30ad48); color: #fff; font: bold 11px/42px "Open Sans", sans-serif; }
.meter { position: absolute; right: 0; top: 767px; width: 10px; height: 59px; padding: 6px 0 0 3px; border: 1px solid #151a22; border-right: 0; border-radius: 4px 0 0 4px; background: #343a4b; }
.meter i { display: block; width: 4px; height: 46px; background: repeating-linear-gradient(transparent 0 2px, #343a4b 2px 3px), linear-gradient(#20242c 24px, #d8dc50 24px, #7ed870 34px, #30d0c0); }
.watermark { position: absolute; right: 9px; bottom: 8px; font: 16px/22px "Liberation Sans", Arial, sans-serif; color: rgba(225, 225, 225, 0.85); text-decoration: none; }
</style>
